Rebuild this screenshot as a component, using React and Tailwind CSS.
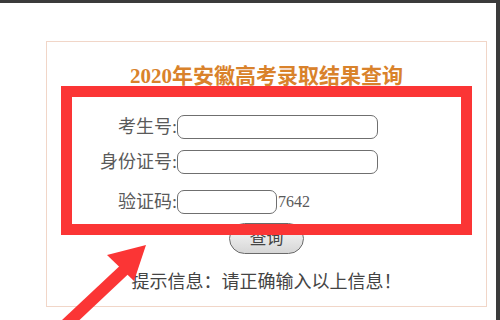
import React from 'react';

const cjk = { fontFamily: '"Liberation Serif", "Noto Sans CJK SC", serif' };

const Row = ({ label, short, extra }) => (
    <div className="flex items-center h-[24px]">
        <div className="w-[130px] text-right text-[18px] text-[#5a5a5a] leading-none">{label}:</div>
        <div
            className={`${short ? 'w-[100px]' : 'w-[201px]'} h-[24px] rounded-[7px] border-[1.5px] border-[#6f6f6f] bg-white`}
        />
        {extra && <span className="text-[16px] text-[#5a5a5a] ml-[1px] leading-none">{extra}</span>}
    </div>
);

const App = () => {
    return (
        <div className="relative w-[500px] h-[320px] overflow-hidden bg-white" style={cjk}>
            {/* window chrome */}
            <div className="absolute top-0 left-0 w-full h-[3px] bg-[#3b3b3b]" />
            <div className="absolute top-0 right-0 w-[4px] h-full bg-[#3b3b3b]" />

            <div className="pt-[41px] pl-[46px]">
                <div className="w-[441px] h-[266px] border-[1.5px] border-[#f1d6c8] flex flex-col">
                    <div className="mt-[24px] text-center text-[21px] font-bold text-[#d9822b] leading-none">
                        2020年安徽高考录取结果查询
                    </div>

                    <div className="mt-[28px] flex flex-col gap-[11px]">
                        <Row label="考生号" />
                        <Row label="身份证号" />
                        <div className="mt-[5px]">
                            <Row label="验证码" short extra="7642" />
                        </div>
                    </div>

                    <div className="mt-[9px] flex justify-center">
                        <div className="w-[75px] h-[31px] rounded-full border-[1.5px] border-[#6a6a6a] bg-gradient-to-b from-[#fbfbfb] to-[#d6d6d6] flex items-center justify-center text-[17px] text-[#444]">
                            查询
                        </div>
                    </div>

                    <div className="mt-[15px] text-center text-[18px] text-[#444]">
                        提示信息：请正确输入以上信息！
                    </div>
                </div>
            </div>

            {/* annotation: red box */}
            <div className="absolute left-[61px] top-[86px] w-[411px] h-[149px] border-[11px] border-[#fb3535]" />

            {/* annotation: red arrow */}
            <svg className="absolute left-0 top-0" width="500" height="320" viewBox="0 0 500 320">
                <path d="M58 332 L124 270" stroke="#fb3535" strokeWidth="12" strokeLinecap="butt" />
                <polygon points="146,245 107,255 134,281" fill="#fb3535" />
            </svg>
        </div>
    );
};

export default App;
